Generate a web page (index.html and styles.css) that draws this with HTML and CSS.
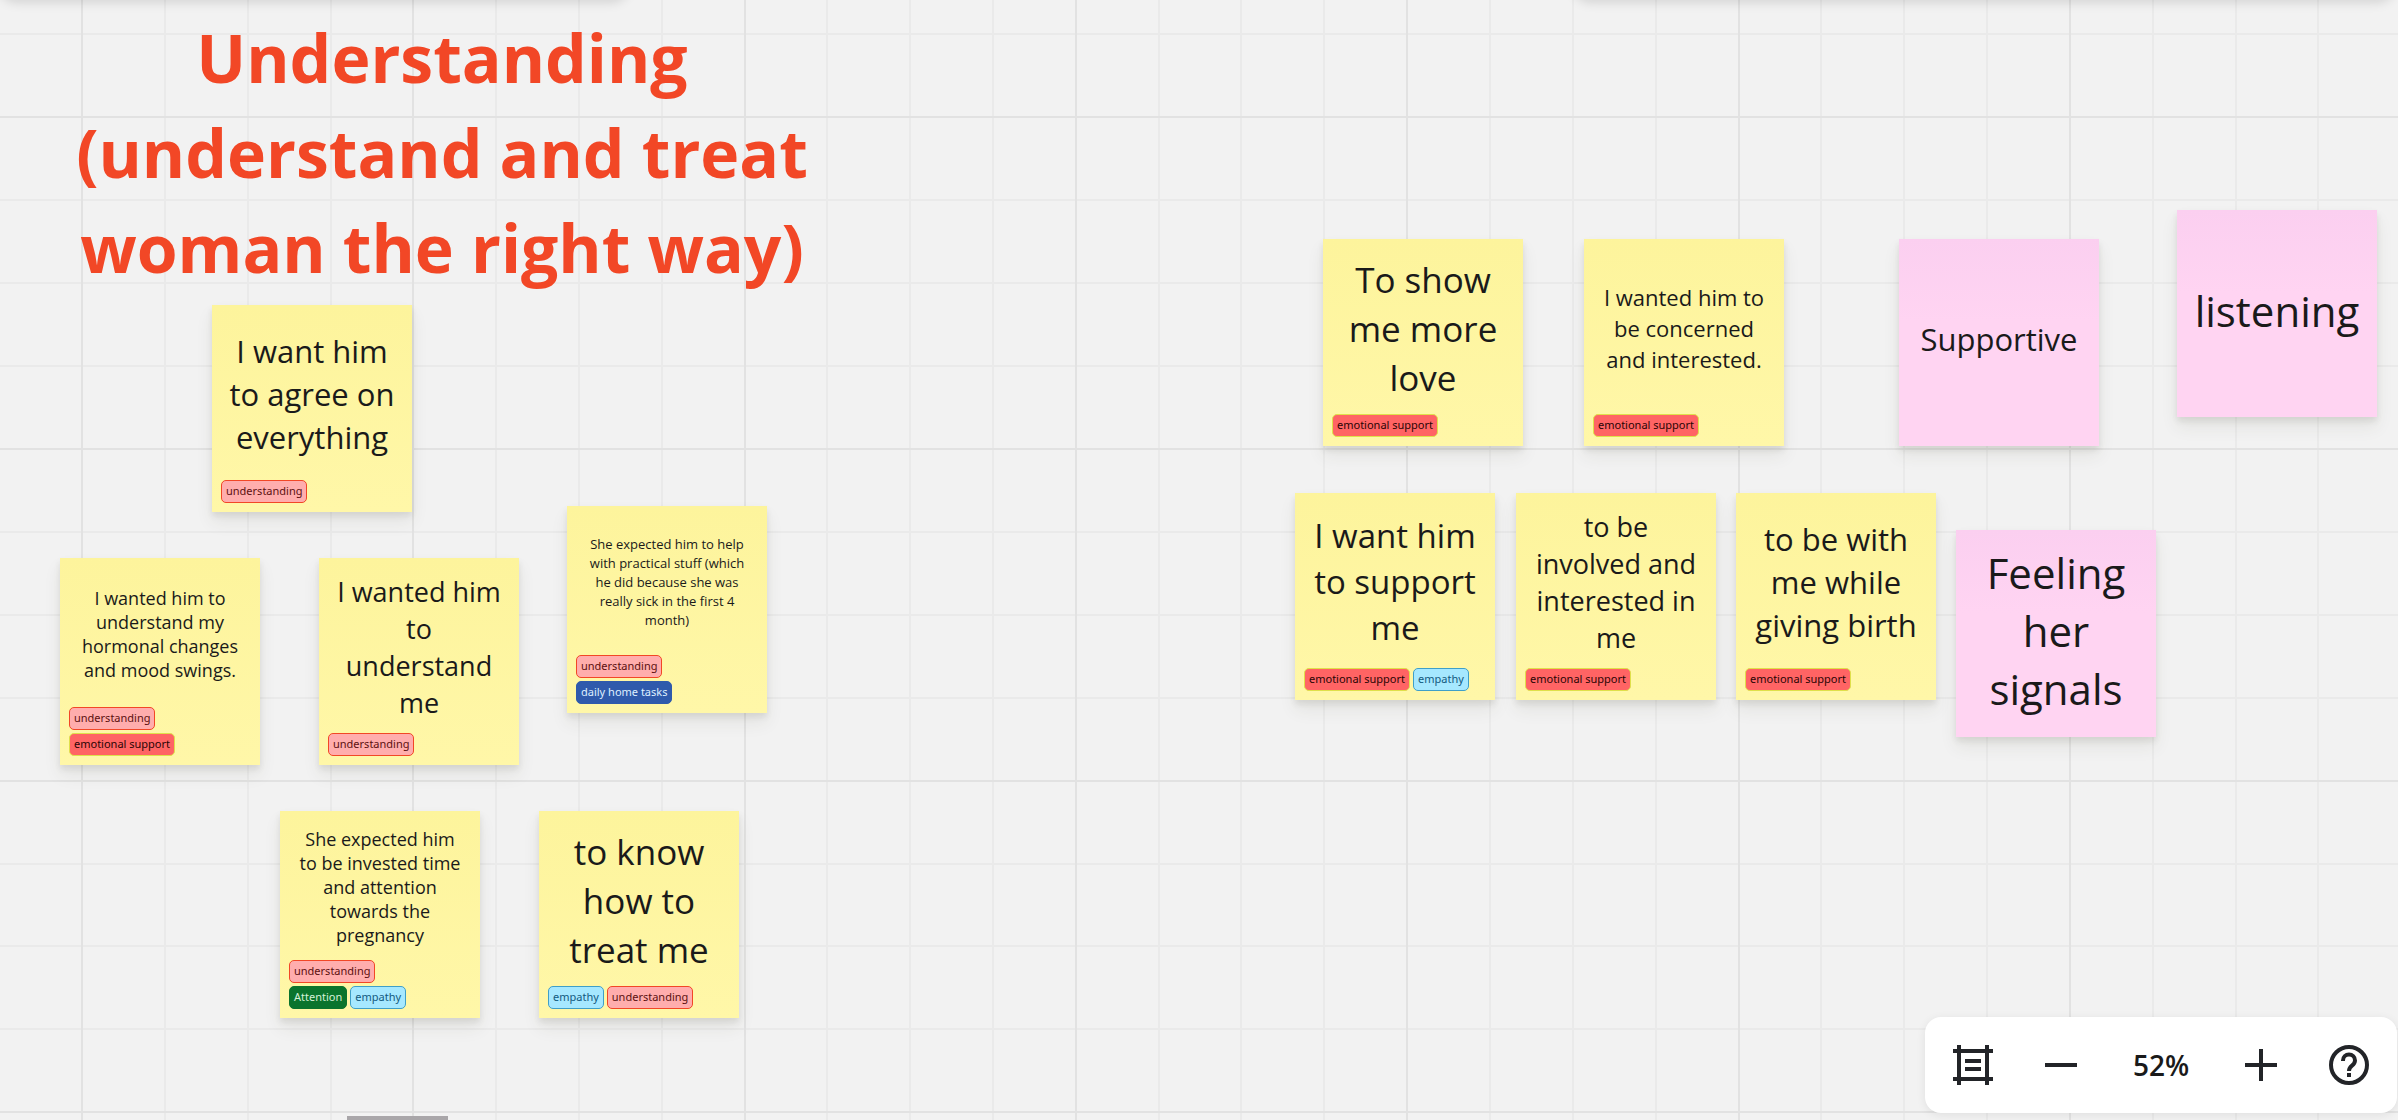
FILE: index.html
```html
<!DOCTYPE html>
<html lang="en">
<head>
<meta charset="utf-8">
<meta name="viewport" content="width=device-width, initial-scale=1">
<title>Board</title>
<link rel="stylesheet" href="styles.css">
</head>
<body>
<main class="board">
  <svg class="grid" aria-hidden="true">
    <path class="grid-minor" d="M0 34h9999M0 200h9999M0 283h9999M0 366h9999M0 532h9999M0 615h9999M0 698h9999M0 864h9999M0 946h9999M0 1029h9999M165 0v9999M248 0v9999M331 0v9999M496 0v9999M579 0v9999M662 0v9999M827 0v9999M910 0v9999M993 0v9999M1159 0v9999M1241 0v9999M1324 0v9999M1490 0v9999M1573 0v9999M1656 0v9999M1821 0v9999M1904 0v9999M1987 0v9999M2153 0v9999M2236 0v9999M2318 0v9999"/>
    <path class="grid-major" d="M0 117h9999M0 449h9999M0 781h9999M0 1112h9999M82 0v9999M413 0v9999M745 0v9999M1076 0v9999M1407 0v9999M1739 0v9999M2070 0v9999"/>
  </svg>

  <h1 class="heading">Understanding<br>(understand and treat<br>woman the right way)</h1>

  <article class="note n-agree">
    <p class="text t-31">I want him<br>to agree on<br>everything</p>
    <div class="tags"><span class="tag understanding">understanding</span></div>
  </article>
  <article class="note n-hormonal">
    <p class="text t-18">I wanted him to<br>understand my<br>hormonal changes<br>and mood swings.</p>
    <div class="tags"><span class="tag understanding">understanding</span></div>
    <div class="tags"><span class="tag emotional">emotional support</span></div>
  </article>
  <article class="note n-understand">
    <p class="text t-27">I wanted him<br>to<br>understand<br>me</p>
    <div class="tags"><span class="tag understanding">understanding</span></div>
  </article>
  <article class="note n-practical">
    <p class="text t-13">She expected him to help<br>with practical stuff (which<br>he did because she was<br>really sick in the first 4<br>month)</p>
    <div class="tags"><span class="tag understanding">understanding</span></div>
    <div class="tags"><span class="tag tasks">daily home tasks</span></div>
  </article>
  <article class="note n-invested">
    <p class="text t-18">She expected him<br>to be invested time<br>and attention<br>towards the<br>pregnancy</p>
    <div class="tags"><span class="tag understanding">understanding</span></div>
    <div class="tags"><span class="tag attention">Attention</span><span class="tag empathy">empathy</span></div>
  </article>
  <article class="note n-treat">
    <p class="text t-35">to know<br>how to<br>treat me</p>
    <div class="tags"><span class="tag empathy">empathy</span><span class="tag understanding">understanding</span></div>
  </article>
  <article class="note n-love">
    <p class="text t-35">To show<br>me more<br>love</p>
    <div class="tags"><span class="tag emotional">emotional support</span></div>
  </article>
  <article class="note n-concerned">
    <p class="text t-22">I wanted him to<br>be concerned<br>and interested.</p>
    <div class="tags"><span class="tag emotional">emotional support</span></div>
  </article>
  <article class="note pink n-supportive">
    <p class="text t-31">Supportive</p>
  </article>
  <article class="note pink n-listening">
    <p class="text t-42">listening</p>
  </article>
  <article class="note n-support">
    <p class="text t-33">I want him<br>to support<br>me</p>
    <div class="tags"><span class="tag emotional">emotional support</span><span class="tag empathy">empathy</span></div>
  </article>
  <article class="note n-involved">
    <p class="text t-27">to be<br>involved and<br>interested in<br>me</p>
    <div class="tags"><span class="tag emotional">emotional support</span></div>
  </article>
  <article class="note n-birth">
    <p class="text t-31">to be with<br>me while<br>giving birth</p>
    <div class="tags"><span class="tag emotional">emotional support</span></div>
  </article>
  <article class="note pink n-signals">
    <p class="text t-42">Feeling<br>her<br>signals</p>
  </article>

  <div class="panel panel-left"></div>
  <div class="panel panel-right"></div>
  <div class="handle"></div>

  <nav class="zoombar" aria-label="Zoom">
    <button class="tool" type="button" aria-label="Frames">
      <svg width="40" height="40" viewBox="0 0 40 40"><path d="M6 0v40M34 0v40M0 6h40M0 34h40M12 16h16M12 24h16"/></svg>
    </button>
    <button class="tool" type="button" aria-label="Zoom out">
      <svg width="40" height="40" viewBox="0 0 40 40"><path d="M4 20h32"/></svg>
    </button>
    <button class="tool level" type="button">52%</button>
    <button class="tool" type="button" aria-label="Zoom in">
      <svg width="40" height="40" viewBox="0 0 40 40"><path d="M4 20h32M20 4v32"/></svg>
    </button>
    <button class="tool" type="button" aria-label="Help">
      <svg width="40" height="40" viewBox="0 0 40 40"><circle cx="20" cy="20" r="18"/><path d="M14 16v-.5a6 6 0 0 1 12 0c0 2.400-1.200 3.800-3 5.200-2 1.500-3 2.300-3 5.300"/><path d="M20 28v4"/></svg>
    </button>
  </nav>
</main>
</body>
</html>
```
FILE: styles.css
```css
* {
  box-sizing: border-box;
}

body {
  margin: 0;
  font-family: "Open Sans", "Noto Sans", sans-serif;
  color: #1a1a1a;
}

.board {
  position: relative;
  height: 100vh;
  overflow: hidden;
  background: #f2f2f2;
}

.grid {
  position: absolute;
  inset: 0;
  width: 100%;
  height: 100%;
}

.grid path {
  fill: none;
  stroke-width: 2;
}

.grid-minor {
  stroke: #eaeaea;
}

.grid-major {
  stroke: #e2e2e2;
}

.heading {
  position: absolute;
  left: 42px;
  top: 10px;
  width: 800px;
  margin: 0;
  font-size: 66px;
  line-height: 95px;
  font-weight: 700;
  text-align: center;
  color: #f24726;
}

/* Sticky notes */
.note {
  position: absolute;
  display: flex;
  flex-direction: column;
  gap: 3px;
  width: 200px;
  height: 207px;
  padding: 6px 9px 9px;
  background: linear-gradient(#fdf49c, #fff7a8);
  box-shadow: 0 4px 6px rgba(60, 60, 40, 0.1), 0 10px 16px rgba(60, 60, 40, 0.08);
}

.pink {
  padding-top: 3px;
  background: linear-gradient(#fbcff0, #ffd4f2 40%);
}

.text {
  display: flex;
  flex: 1;
  flex-direction: column;
  justify-content: center;
  margin: 0 -9px;
  text-align: center;
}

.t-13 { font-size: 13px; line-height: 19px; }
.t-18 { font-size: 18px; line-height: 24px; }
.t-22 { font-size: 22px; line-height: 31px; }
.t-27 { font-size: 27px; line-height: 37px; }
.t-31 { font-size: 31px; line-height: 43px; }
.t-33 { font-size: 33px; line-height: 46px; }
.t-35 { font-size: 35px; line-height: 49px; }
.t-42 { font-size: 42px; line-height: 58px; }

.tags {
  display: flex;
  gap: 3px;
}

.tag {
  height: 23px;
  padding: 0 4px;
  border: 1px solid;
  border-radius: 5px;
  font-family: "Noto Sans", sans-serif;
  font-size: 11px;
  line-height: 20px;
  white-space: nowrap;
}

.understanding { background: #ffadad; border-color: #f24726; color: #5c1010; }
.emotional { background: #ff6464; border-color: #dfe04a; color: #2b0505; }
.empathy { background: #a6e8ff; border-color: #3f9fc8; color: #125a80; }
.attention { background: #0a742d; border-color: #0a742d; color: #d5f0d8; }
.tasks { background: #2f5aac; border-color: #2f5aac; color: #dff0ff; }

.n-agree { left: 212px; top: 305px; }
.n-hormonal { left: 60px; top: 558px; }
.n-understand { left: 319px; top: 558px; }
.n-practical { left: 567px; top: 506px; }
.n-invested { left: 280px; top: 811px; }
.n-treat { left: 539px; top: 811px; }
.n-love { left: 1323px; top: 239px; }
.n-concerned { left: 1584px; top: 239px; }
.n-supportive { left: 1899px; top: 239px; }
.n-listening { left: 2177px; top: 210px; }
.n-support { left: 1295px; top: 493px; }
.n-involved { left: 1516px; top: 493px; }
.n-birth { left: 1736px; top: 493px; }
.n-signals { left: 1956px; top: 530px; }

/* Floating panels whose lower edge meets the top of the window */
.panel {
  position: absolute;
  bottom: 100%;
  height: 96px;
  border-radius: 16px;
  box-shadow: 0 2px 12px rgba(0, 0, 0, 0.14);
}

.panel-left {
  left: 0;
  width: 628px;
}

.panel-right {
  right: 4px;
  width: 820px;
}

.handle {
  position: absolute;
  left: 347px;
  bottom: 0;
  width: 101px;
  height: 4px;
  background: #a9a6a9;
}

.zoombar {
  position: absolute;
  right: 1px;
  bottom: 7px;
  display: flex;
  height: 96px;
  padding: 4px;
  border-radius: 16px;
  background: #fff;
  box-shadow: 0 2px 10px rgba(0, 0, 0, 0.08);
}

.tool {
  display: flex;
  align-items: center;
  justify-content: center;
  width: 88px;
  padding: 0;
  border: 0;
  background: none;
  color: #222428;
}

.tool svg {
  fill: none;
  stroke: currentColor;
  stroke-width: 4;
}

.level {
  width: 112px;
  font: 600 28px "Open Sans", sans-serif;
  color: #1a1a1a;
}
```
